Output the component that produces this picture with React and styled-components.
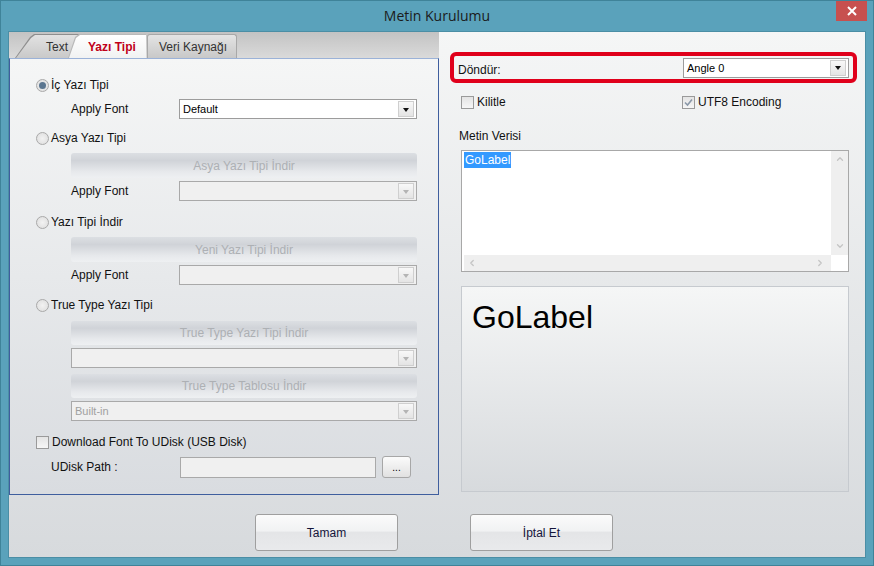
import React from 'react';
import styled, { createGlobalStyle, css } from 'styled-components';
import { ChevronUp, ChevronDown, ChevronLeft, ChevronRight } from 'lucide-react';

const Global = createGlobalStyle`
  html, body { margin: 0; padding: 0; background: #5aa2bb; }
  body { font-family: "Liberation Sans", Arial, sans-serif; font-size: 12px; color: #000; }
  * { box-sizing: border-box; }
`;

const Window = styled.div`
  width: 874px;
  height: 566px;
  background: #5aa2bb;
  border: 1px solid #3f8399;
  display: flex;
  flex-direction: column;
  overflow: hidden;
`;

const TitleBar = styled.div`
  height: 30px;
  position: relative;
  display: flex;
  align-items: center;
  justify-content: center;
  font-family: "Open Sans", "Noto Sans", sans-serif;
  font-size: 14px;
  color: #1b1b1b;
  padding-bottom: 2px;
`;

const CloseBtn = styled.div`
  position: absolute;
  right: 6px;
  top: 0;
  width: 31px;
  height: 20px;
  background: #c7504f;
  display: flex;
  align-items: center;
  justify-content: center;
`;

const Client = styled.div`
  flex: 1;
  margin: 0 7px 7px 7px;
  background: linear-gradient(#f5f6f6, #d7dadd);
  border: 1px solid #4b8ea5;
  display: flex;
  flex-direction: column;
`;

const Main = styled.div`
  display: flex;
  height: 463px;
`;

const LeftCol = styled.div`
  width: 430px;
  display: flex;
  flex-direction: column;
`;

const TabStrip = styled.div`
  height: 26px;
  background: linear-gradient(#c3c3c3, #dadada);
  display: flex;
  align-items: flex-end;
  padding-left: 6px;
`;

const tabShape = css`
  height: 24px;
  display: flex;
  align-items: center;
  font-size: 12px;
`;

const SlantTab = styled.div`
  ${tabShape};
  width: ${p => p.$w}px;
  flex: none;
  margin-left: ${p => p.$ml || 0}px;
  clip-path: polygon(0 100%, ${p => p.$s}px 3px, ${p => p.$s + 4}px 0, 100% 0, 100% 100%);
  position: relative;
  z-index: ${p => (p.$active ? 2 : 1)};
  background: ${p => (p.$active ? '#b9b9b9' : '#8e8e8e')};
  padding: 1px 0 0 1px;
  & > span {
    ${tabShape};
    width: 100%;
    height: 100%;
    white-space: nowrap;
    clip-path: polygon(0 100%, ${p => p.$s}px 3px, ${p => p.$s + 4}px 0, 100% 0, 100% 100%);
    background: ${p => (p.$active ? 'linear-gradient(#ffffff, #f1f2f2)' : 'linear-gradient(#e2e2e2, #c9c9c9)')};
    color: ${p => (p.$active ? '#c0001a' : '#333')};
    font-weight: ${p => (p.$active ? 'bold' : 'normal')};
    padding-left: ${p => p.$pl}px;
  }
`;

const Tab = styled.div`
  ${tabShape};
  padding: 0 9px 0 11px;
  margin-left: 1px;
  border: 1px solid #a8a8a8;
  border-bottom: none;
  border-radius: 3px 3px 0 0;
  background: linear-gradient(#e4e4e4, #c8c8c8);
  color: #333;
`;

const Panel = styled.div`
  flex: 1;
  border: 1px solid #3f5e9e;
  border-top-color: #9bb2d8;
  background: linear-gradient(#f5f6f6, #d9dce0);
  display: flex;
  flex-direction: column;
  padding-left: 26px;
  padding-right: 21px;
`;

const Row = styled.div`
  display: flex;
  align-items: center;
  margin-top: ${p => p.$mt}px;
  margin-left: ${p => p.$ml || 0}px;
  height: ${p => p.$h || 14}px;
`;

const Radio = styled.span`
  width: 13px;
  height: 13px;
  border-radius: 50%;
  border: 1px solid #a9a9a9;
  background: radial-gradient(circle, #f2f2f2 0, #dcdcdc 100%);
  display: inline-flex;
  align-items: center;
  justify-content: center;
  margin-right: 2px;
  &::after {
    content: '';
    width: 7px;
    height: 7px;
    border-radius: 50%;
    background: ${p => (p.$on ? '#5b7690' : 'transparent')};
  }
`;

const Check = styled.span`
  width: 13px;
  height: 13px;
  border: 1px solid #9a9a9a;
  background: linear-gradient(#e4e4e4, #f6f6f6);
  display: inline-flex;
  align-items: center;
  justify-content: center;
  margin-right: 3px;
`;

const Label = styled.span`
  width: ${p => (p.$w ? `${p.$w}px` : 'auto')};
  flex: none;
  color: #111;
`;

const Combo = styled.div`
  width: ${p => p.$w}px;
  height: 20px;
  border: 1px solid ${p => (p.$disabled ? '#a9a9a9' : '#9c9c9c')};
  background: ${p => (p.$disabled ? '#f0f0f0' : '#fff')};
  display: flex;
  align-items: center;
  padding: 0 2px 0 2px;
  font-size: 11px;
  color: ${p => (p.$disabled ? '#a0a0a0' : '#000')};
  & > span { flex: 1; padding-left: 1px; }
`;

const Arrow = styled.div`
  width: 16px;
  height: 16px;
  border: 1px solid #cfcfcf;
  background: linear-gradient(#f8f8f8, #e4e4e4);
  display: flex;
  align-items: center;
  justify-content: center;
  &::after {
    content: '';
    border-left: 3.5px solid transparent;
    border-right: 3.5px solid transparent;
    border-top: 4px solid ${p => (p.$disabled ? '#b4b4b4' : '#111')};
    margin-top: 1px;
  }
`;

const GhostButton = styled.div`
  height: ${p => p.$h || 25}px;
  margin-top: ${p => p.$mt}px;
  margin-left: 35px;
  border-radius: 3px;
  background: linear-gradient(#dcdfe3 0%, #d0d3d8 30%, #e7e9ec 75%, #eef0f2 100%);
  display: flex;
  align-items: center;
  justify-content: center;
  color: #adb0b4;
  font-size: 12px;
`;

const Field = styled.div`
  width: 196px;
  height: 21px;
  border: 1px solid #a9a9a9;
  background: #f0f0f0;
`;

const SmallButton = styled.div`
  width: 29px;
  height: 22px;
  margin-left: 6px;
  border: 1px solid #a7a7a7;
  border-radius: 3px;
  background: linear-gradient(#fbfbfb, #e1e1e1);
  display: flex;
  align-items: flex-end;
  justify-content: center;
  padding-bottom: 4px;
  font-size: 10px;
  line-height: 10px;
`;

const RightCol = styled.div`
  flex: 1;
  padding: 20px 8px 0 11px;
  display: flex;
  flex-direction: column;
`;

const RedBox = styled.div`
  height: 31px;
  border: 4px solid #e0001b;
  border-radius: 6px;
  display: flex;
  align-items: center;
  justify-content: space-between;
  padding: 0 4px 0 4px;
  & > ${Label} { margin-top: 5px; }
`;

const CheckRow = styled.div`
  display: flex;
  margin-top: 12px;
  padding-left: 11px;
  height: 14px;
  align-items: center;
`;

const CheckItem = styled.div`
  display: flex;
  align-items: center;
  width: ${p => (p.$w ? `${p.$w}px` : 'auto')};
`;

const Caption = styled.div`
  margin-top: 20px;
  padding-left: 9px;
  height: 14px;
  color: #111;
`;

const TextArea = styled.div`
  margin: 7px 0 0 11px;
  width: 388px;
  height: 122px;
  border: 1px solid #a8a8a8;
  background: #fff;
  display: grid;
  grid-template-columns: 1fr 17px;
  grid-template-rows: 1fr 16px;
`;

const TextBody = styled.div`
  padding: 2px 2px;
  & > span {
    background: #3399ff;
    color: #fff;
    padding: 1px 1px 1px 1px;
  }
`;

const VScroll = styled.div`
  background: #efefef;
  display: flex;
  flex-direction: column;
  justify-content: space-between;
  align-items: center;
  padding: 3px 0 4px;
`;

const HScroll = styled.div`
  margin-left: 2px;
  background: #efefef;
  display: flex;
  justify-content: space-between;
  align-items: center;
  padding: 0 6px 0 3px;
`;

const Preview = styled.div`
  margin: 14px 0 0 11px;
  width: 388px;
  height: 206px;
  border: 1px solid #c6cacf;
  background: linear-gradient(#f5f6f6, #d7dadd);
  padding: 12px 0 0 10px;
  font-family: "Liberation Sans", Arial, sans-serif;
  font-size: 32px;
  line-height: 36px;
  color: #000;
`;

const Footer = styled.div`
  flex: 1;
  display: flex;
  justify-content: center;
  gap: 72px;
  padding: 19px 6px 0 0;
`;

const DlgButton = styled.div`
  width: 143px;
  height: 37px;
  border: 1px solid #9f9f9f;
  border-radius: 3px;
  background: linear-gradient(#fbfbfb 0%, #f1f2f3 45%, #e4e5e7 50%, #e9eaec 100%);
  display: flex;
  align-items: center;
  justify-content: center;
  font-size: 12px;
  color: #14143a;
`;

const Tick = ({ grey }) => (
  <svg width="9" height="9" viewBox="0 0 9 9">
    <path d="M1 4.5 L3.5 7 L8 1.5" fill="none" stroke={grey ? '#8a98a8' : '#333'} strokeWidth="1.6" />
  </svg>
);

const ComboBox = ({ w, value, disabled }) => (
  <Combo $w={w} $disabled={disabled}>
    <span>{value}</span>
    <Arrow $disabled={disabled} />
  </Combo>
);

export default function App() {
  return (
    <>
      <Global />
      <Window>
        <TitleBar>
          Metin Kurulumu
          <CloseBtn>
            <svg width="10" height="10" viewBox="0 0 10 10">
              <path d="M1 1 L9 9 M9 1 L1 9" stroke="#fff" strokeWidth="2" />
            </svg>
          </CloseBtn>
        </TitleBar>
        <Client>
          <Main>
            <LeftCol>
              <TabStrip>
                <SlantTab $w={68} $s={15} $pl={30}><span>Text</span></SlantTab>
                <SlantTab $w={78} $ml={-15} $s={7} $pl={19} $active><span>Yazı Tipi</span></SlantTab>
                <Tab>Veri Kaynağı</Tab>
              </TabStrip>
              <Panel>
                <Row $mt={19}><Radio $on /><Label>İç Yazı Tipi</Label></Row>
                <Row $mt={7} $h={20} $ml={35}>
                  <Label $w={108}>Apply Font</Label>
                  <ComboBox w={238} value="Default" />
                </Row>

                <Row $mt={12}><Radio /><Label>Asya Yazı Tipi</Label></Row>
                <GhostButton $mt={8}>Asya Yazı Tipi İndir</GhostButton>
                <Row $mt={3} $h={20} $ml={35}>
                  <Label $w={108}>Apply Font</Label>
                  <ComboBox w={238} disabled />
                </Row>

                <Row $mt={14}><Radio /><Label>Yazı Tipi İndir</Label></Row>
                <GhostButton $mt={8}>Yeni Yazı Tipi İndir</GhostButton>
                <Row $mt={3} $h={20} $ml={35}>
                  <Label $w={108}>Apply Font</Label>
                  <ComboBox w={238} disabled />
                </Row>

                <Row $mt={13}><Radio /><Label>True Type Yazı Tipi</Label></Row>
                <GhostButton $mt={9} $h={24}>True Type Yazı Tipi İndir</GhostButton>
                <Row $mt={3} $h={20} $ml={35}>
                  <ComboBox w={347} disabled />
                </Row>
                <GhostButton $mt={6} $h={24}>True Type Tablosu İndir</GhostButton>
                <Row $mt={3} $h={20} $ml={35}>
                  <ComboBox w={347} value="Built-in" disabled />
                </Row>

                <Row $mt={14}><Check /><Label>Download Font To UDisk (USB Disk)</Label></Row>
                <Row $mt={7} $h={22} $ml={15}>
                  <Label $w={129}>UDisk Path :</Label>
                  <Field />
                  <SmallButton>...</SmallButton>
                </Row>
              </Panel>
            </LeftCol>

            <RightCol>
              <RedBox>
                <Label>Döndür:</Label>
                <ComboBox w={166} value="Angle 0" />
              </RedBox>
              <CheckRow>
                <CheckItem $w={221}><Check /><Label>Kilitle</Label></CheckItem>
                <CheckItem><Check><Tick grey /></Check><Label>UTF8 Encoding</Label></CheckItem>
              </CheckRow>
              <Caption>Metin Verisi</Caption>
              <TextArea>
                <TextBody><span>GoLabel</span></TextBody>
                <VScroll>
                  <ChevronUp size={10} color="#c4c4c4" strokeWidth={3} />
                  <ChevronDown size={10} color="#c4c4c4" strokeWidth={3} />
                </VScroll>
                <HScroll>
                  <ChevronLeft size={10} color="#c4c4c4" strokeWidth={3} />
                  <ChevronRight size={10} color="#c4c4c4" strokeWidth={3} />
                </HScroll>
                <div />
              </TextArea>
              <Preview>GoLabel</Preview>
            </RightCol>
          </Main>
          <Footer>
            <DlgButton>Tamam</DlgButton>
            <DlgButton>İptal Et</DlgButton>
          </Footer>
        </Client>
      </Window>
    </>
  );
}
